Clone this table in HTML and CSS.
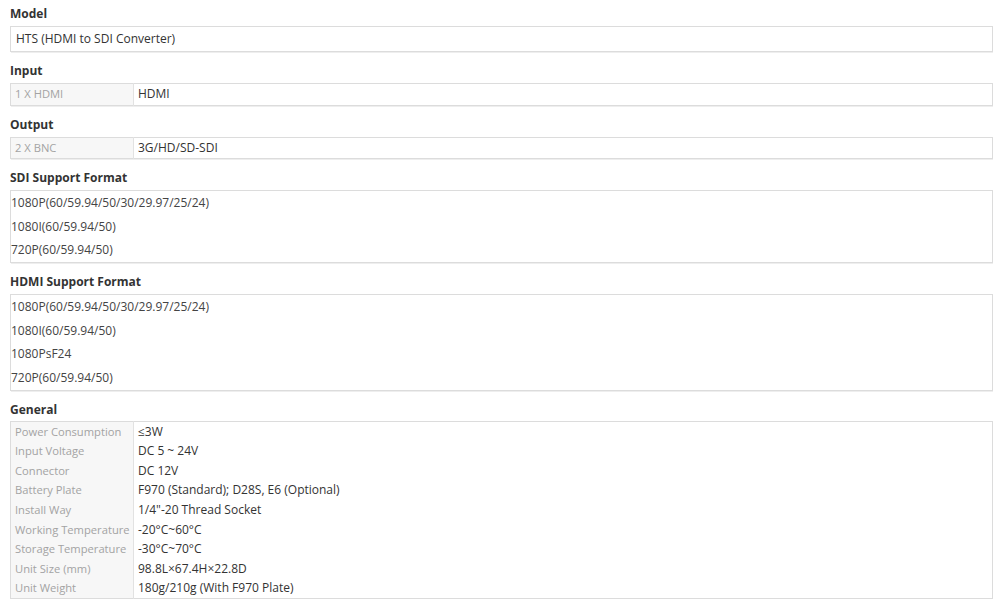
FILE: index.html
```html
<!DOCTYPE html>
<html lang="en">

<head>
    <meta charset="UTF-8">
    <meta name="viewport" content="width=device-width, initial-scale=1.0">
    <link rel="stylesheet" href="styles.css">
    <title>HTS Specifications</title>
</head>

<body>
    <div class="specs">
        <h4 class="specTitle">Model</h4>
        <div class="specBox single">HTS (HDMI to SDI Converter)</div>

        <h4 class="specTitle">Input</h4>
        <table class="specBox pair">
            <tr>
                <td class="label">1 X HDMI</td>
                <td>HDMI</td>
            </tr>
        </table>

        <h4 class="specTitle">Output</h4>
        <table class="specBox pair">
            <tr>
                <td class="label">2 X BNC</td>
                <td>3G/HD/SD-SDI</td>
            </tr>
        </table>

        <h4 class="specTitle">SDI Support Format</h4>
        <ul class="specBox list">
            <li>1080P(60/59.94/50/30/29.97/25/24)</li>
            <li>1080I(60/59.94/50)</li>
            <li>720P(60/59.94/50)</li>
        </ul>

        <h4 class="specTitle">HDMI Support Format</h4>
        <ul class="specBox list">
            <li>1080P(60/59.94/50/30/29.97/25/24)</li>
            <li>1080I(60/59.94/50)</li>
            <li>1080PsF24</li>
            <li>720P(60/59.94/50)</li>
        </ul>

        <h4 class="specTitle">General</h4>
        <table class="specBox pair general">
            <tr><td class="label">Power Consumption</td><td>&le;3W</td></tr>
            <tr><td class="label">Input Voltage</td><td>DC 5 ~ 24V</td></tr>
            <tr><td class="label">Connector</td><td>DC 12V</td></tr>
            <tr><td class="label">Battery Plate</td><td>F970 (Standard); D28S, E6 (Optional)</td></tr>
            <tr><td class="label">Install Way</td><td>1/4"-20 Thread Socket</td></tr>
            <tr><td class="label">Working Temperature</td><td>-20&deg;C~60&deg;C</td></tr>
            <tr><td class="label">Storage Temperature</td><td>-30&deg;C~70&deg;C</td></tr>
            <tr><td class="label">Unit Size (mm)</td><td>98.8L&times;67.4H&times;22.8D</td></tr>
            <tr><td class="label">Unit Weight</td><td>180g/210g (With F970 Plate)</td></tr>
        </table>
    </div>
</body>

</html>
```

FILE: styles.css
```css
body {
    margin: 6px 7px 0 10px;
    background-color: #fff;
    font-family: "Open Sans", "Noto Sans", sans-serif;
    font-size: 12px;
    color: #333;
}

.specs {
    width: 983px;
}

.specTitle {
    margin: 11px 0 4px 0;
    line-height: 16px;
    font-size: 12px;
    font-weight: bold;
    color: #333;
}

.specTitle:first-child {
    margin-top: 0;
}

.specBox {
    width: 100%;
    box-sizing: border-box;
    border: 1px solid #dcdcdc;
    box-shadow: 1px 1px 0 #eee;
}

.single {
    height: 26px;
    line-height: 24px;
    padding: 0 5px;
}

.pair {
    border-collapse: collapse;
    table-layout: fixed;
}

.pair td {
    height: 20.5px;
    padding: 0 4px;
    line-height: 16px;
    white-space: nowrap;
}

.pair .label {
    width: 114px;
    border-right: 1px solid #e2e2e2;
    background-color: #f7f7f7;
    color: #a3a3a3;
    font-size: 11.2px;
}

.general {
    margin-top: -1px;
}

.general td {
    height: 19.6px;
    padding-top: 0;
    padding-bottom: 0;
}

.list {
    margin: 0;
    padding: 0;
    list-style: none;
    color: #444;
}

.list li {
    height: 23.7px;
    line-height: 23.7px;
}
```
